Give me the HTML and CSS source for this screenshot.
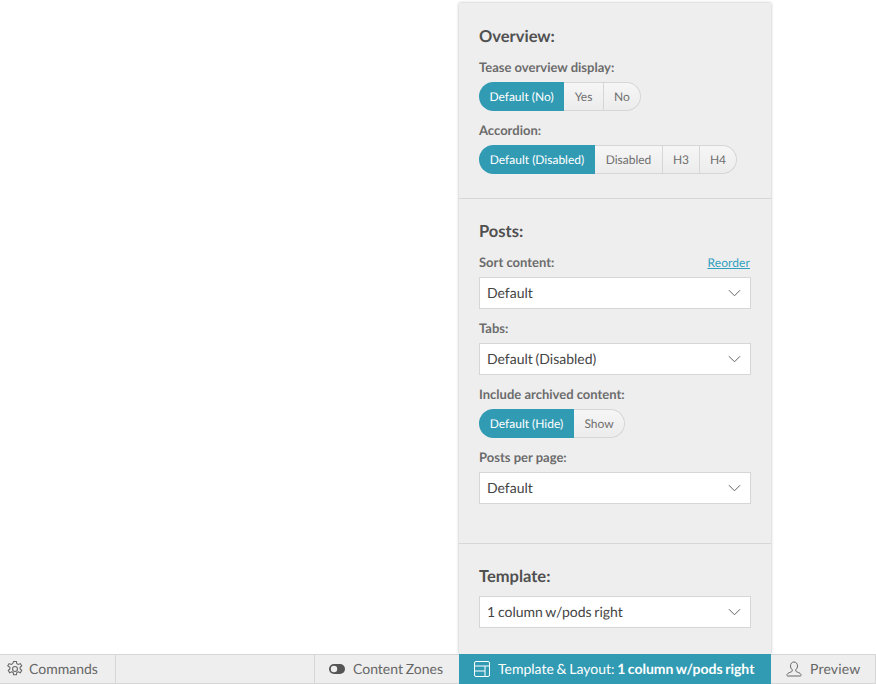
FILE: index.html
```html
<!DOCTYPE html>
<html lang="en">
<head>
<meta charset="utf-8">
<title>Template &amp; Layout</title>
<link rel="stylesheet" href="styles.css">
</head>
<body>
<div class="page">
  <main class="stage">
    <aside class="panel">
      <section class="section section-overview">
        <h2 class="title">Overview:</h2>
        <div class="label">Tease overview display:</div>
        <div class="pills">
          <span class="pill active pill-w85">Default (No)</span><span class="pill pill-w40">Yes</span><span class="pill pill-w37">No</span>
        </div>
        <div class="label label-next">Accordion:</div>
        <div class="pills">
          <span class="pill active pill-w116">Default (Disabled)</span><span class="pill pill-w68">Disabled</span><span class="pill pill-w37">H3</span><span class="pill pill-w37">H4</span>
        </div>
      </section>
      <section class="section section-posts">
        <h2 class="title">Posts:</h2>
        <div class="label-row">
          <div class="label">Sort content:</div>
          <a class="link" href="#">Reorder</a>
        </div>
        <div class="select"><span>Default</span><svg class="chev" viewBox="0 0 14 8"><path d="M1 1l6 6 6-6"/></svg></div>
        <div class="label label-next">Tabs:</div>
        <div class="select"><span>Default (Disabled)</span><svg class="chev" viewBox="0 0 14 8"><path d="M1 1l6 6 6-6"/></svg></div>
        <div class="label label-next">Include archived content:</div>
        <div class="pills">
          <span class="pill active pill-w95">Default (Hide)</span><span class="pill pill-w51">Show</span>
        </div>
        <div class="label label-next">Posts per page:</div>
        <div class="select"><span>Default</span><svg class="chev" viewBox="0 0 14 8"><path d="M1 1l6 6 6-6"/></svg></div>
      </section>
      <section class="section section-template">
        <h2 class="title title-template">Template:</h2>
        <div class="select"><span>1 column w/pods right</span><svg class="chev" viewBox="0 0 14 8"><path d="M1 1l6 6 6-6"/></svg></div>
      </section>
    </aside>
  </main>
  <nav class="bar">
    <div class="cell cell-commands">
      <svg class="icon" viewBox="0.5 0.5 15 15"><path d="M6.700 1h2.600l.4 2 1.400.7 1.900-.8 1.300 2.200-1.500 1.300v1.600l1.500 1.300-1.300 2.200-1.900-.8-1.400.7-.4 2H6.700l-.4-2-1.400-.7-1.900.8-1.300-2.200 1.500-1.300V6.400L1.200 5.100l1.300-2.200 1.900.8 1.400-.7z"/><circle cx="8" cy="8" r="2.300"/></svg>
      <span>Commands</span>
    </div>
    <div class="cell cell-spacer"></div>
    <div class="cell cell-zones">
      <svg class="toggle" viewBox="0 0 16 10"><rect width="16" height="10" rx="5" class="toggle-track"/><circle cx="5" cy="5" r="3.200" class="toggle-knob"/></svg>
      <span>Content Zones</span>
    </div>
    <div class="cell cell-template">
      <svg class="icon icon-light" viewBox="0 0 16 16"><rect x=".5" y=".5" width="15" height="15" rx="1.500"/><path d="M.5 5h15M.5 10h10.500M11 5v10.500"/></svg>
      <span>Template &amp; Layout: <b>1 column w/pods right</b></span>
    </div>
    <div class="cell cell-preview">
      <svg class="icon icon-person" viewBox="0 0 16 16"><path d="M8 1c-2.200 0-3.500 1.700-3.500 3.900 0 1.600.7 3 1.700 3.800v1.500c0 .6-4.700 1.500-5.200 3.300-.1.500.1 1.500.5 1.500h13c.4 0 .6-1 .5-1.500-.5-1.800-5.200-2.700-5.200-3.300V8.700c1-.8 1.700-2.200 1.700-3.800C11.500 2.700 10.200 1 8 1z"/></svg>
      <span class="preview-text">Preview</span>
    </div>
  </nav>
</div>
</body>
</html>
```
FILE: styles.css
```css
* { box-sizing: border-box; }
html, body { margin: 0; padding: 0; background: #fff; }
body { font-family: Lato, "Liberation Sans", sans-serif; color: #555; text-rendering: geometricPrecision; }
.page { width: 876px; height: 684px; display: flex; flex-direction: column; overflow: hidden; }
.stage { height: 654px; padding-top: 3px; padding-left: 459px; }
.panel { width: 312px; height: 651px; background: #eeeeee; box-shadow: 0 0 3px rgba(0,0,0,.28); display: flex; flex-direction: column; }
.section { padding: 0 20px; border-bottom: 1px solid #d6d6d6; }
.section-overview { height: 196px; padding-top: 23px; }
.section-posts { height: 345px; padding-top: 22px; }
.section-template { border-bottom: 0; padding-top: 22px; }
.title { margin: 0; font-size: 16.5px; line-height: 21px; font-weight: 700; color: #505050; }
.title-template { margin-bottom: 9px; }
.label { font-size: 13px; line-height: 16px; font-weight: 700; color: #6b6b6b; margin-top: 12px; margin-bottom: 7px; }
.label-next { margin-top: 11px; margin-bottom: 7px; }
.label-row { display: flex; justify-content: space-between; align-items: flex-start; }
.link { font-size: 12px; letter-spacing: .1px; line-height: 16px; color: #2f9fc0; margin-top: 13px; margin-right: 1px; text-decoration: underline; }
.pills { display: flex; height: 29px; }
.pill { display: flex; align-items: center; justify-content: center; font-size: 12px; color: #6f6f6f; border: 1px solid #d6d6d6; border-left-width: 0; background: linear-gradient(#f6f6f6, #ececec); }
.pill:last-child { border-radius: 0 15px 15px 0; }
.pill.active { background: #329bb4; border: 0; color: #fff; border-radius: 15px 0 0 15px; }
.pill-w85 { width: 85px; }
.pill-w40 { width: 40px; }
.pill-w116 { width: 116px; }
.pill-w68 { width: 68px; }
.pill-w37 { width: 37px; }
.pill-w95 { width: 95px; }
.pill-w51 { width: 51px; }
.select { height: 32px; width: 272px; background: #fff; border: 1px solid #d6d6d6; display: flex; align-items: center; justify-content: space-between; padding: 0 9px 0 7px; font-size: 14px; color: #444; word-spacing: -.8px; }
.select span { padding-bottom: 2px; }
.chev { width: 13px; height: 8px; fill: none; stroke: #555; stroke-width: 1; }
.bar { height: 30px; display: flex; background: #eeeeee; border-top: 1px solid #d6d6d6; border-bottom: 1px solid #d6d6d6; font-size: 14px; color: #666; }
.cell { display: flex; align-items: center; height: 100%; padding-bottom: 2px; }
.cell-commands { width: 116px; padding-left: 7px; gap: 6px; border-right: 1px solid #d6d6d6; }
.cell-spacer { width: 199px; border-right: 1px solid #d6d6d6; }
.cell-zones { width: 144px; padding-left: 14px; gap: 8px; word-spacing: -.8px; }
.cell-template { width: 312px; margin: -1px 0; height: 30px; background: #329bb4; color: #fff; padding-left: 15px; gap: 8px; word-spacing: -.9px; }
.cell-template b { font-weight: 700; }
.cell-preview { width: 105px; padding-left: 15px; gap: 8px; border-right: 1px solid #d6d6d6; }
.preview-text { letter-spacing: .15px; }
.icon { width: 16px; height: 16px; fill: none; stroke: #666; stroke-width: 1; flex: none; margin-top: 2px; }
.icon-light { stroke: #fff; }
.toggle { width: 16px; height: 10px; flex: none; margin-top: 2px; }
.toggle-track { fill: #555; }
.toggle-knob { fill: #eee; }
```
